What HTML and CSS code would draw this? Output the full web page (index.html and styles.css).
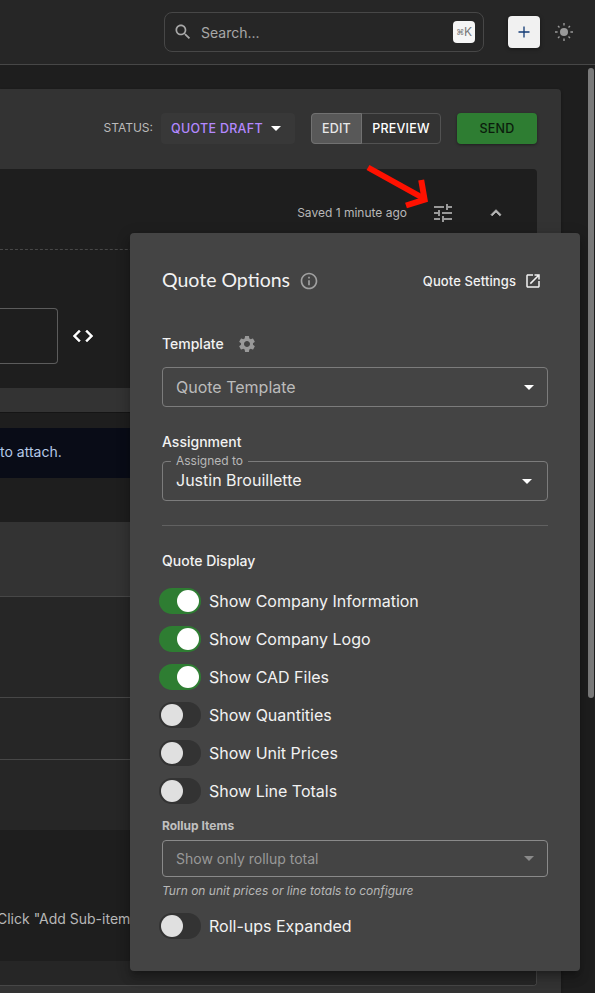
FILE: index.html
```html
<!DOCTYPE html>
<html lang="en">
<head>
  <meta charset="UTF-8">
  <meta name="viewport" content="width=device-width, initial-scale=1.0">
  <title>Quote Draft</title>
  <link rel="stylesheet" href="styles.css">
</head>
<body>
  <header class="topbar">
    <div class="search">
      <svg class="search-icon" viewBox="0 0 24 24"><path d="M15.5 14h-.79l-.28-.27C15.41 12.59 16 11.11 16 9.5 16 5.91 13.09 3 9.5 3S3 5.91 3 9.5 5.91 16 9.5 16c1.61 0 3.09-.59 4.23-1.57l.27.28v.79l5 4.99L20.49 19l-4.99-5zm-6 0C7.01 14 5 11.99 5 9.5S7.01 5 9.5 5 14 7.01 14 9.5 11.99 14 9.5 14z"/></svg>
      <span class="search-text">Search...</span>
      <span class="shortcut"><small>⌘</small>K</span>
    </div>
    <button class="add-button" aria-label="Add">
      <svg viewBox="0 0 12 12"><path d="M6 .5v11M.5 6h11"/></svg>
    </button>
    <svg class="sun-icon" viewBox="0 0 20 20">
      <circle cx="10" cy="10" r="4"/>
      <path d="M10 1v2.6M10 16.4V19M1 10h2.6M16.4 10H19M4 4l1.5 1.5M14.5 14.5L16 16M4 16l1.5-1.5M14.5 5.5L16 4"/>
    </svg>
  </header>

  <main class="page">
    <div class="quote">
      <div class="toolbar">
        <span class="status-label">STATUS:</span>
        <button class="status-button">QUOTE DRAFT <i class="caret"></i></button>
        <div class="toggle-group">
          <button class="toggle selected">EDIT</button>
          <button class="toggle">PREVIEW</button>
        </div>
        <button class="send-button">SEND</button>
      </div>

      <section class="details">
        <div class="details-bar">
          <span class="saved">Saved 1 minute ago</span>
          <svg class="tune-icon" viewBox="0 0 24 24"><path d="M3 17v2h6v-2H3zM3 5v2h10V5H3zm10 16v-2h8v-2h-8v-2h-2v6h2zM7 9v2H3v2h4v2h2V9H7zm14 4v-2H11v2h10zm-6-4h2V7h4V5h-4V3h-2v6z"/></svg>
          <svg class="collapse-icon" viewBox="0 0 24 24"><path d="M12 8l-6 6 1.41 1.41L12 10.83l4.59 4.58L18 14z"/></svg>
        </div>
        <div class="field-row">
          <div class="field"></div>
          <svg class="code-icon" viewBox="0 0 24 24"><path d="M9.4 16.6L4.8 12l4.6-4.6L8 6l-6 6 6 6 1.4-1.4zm5.2 0l4.6-4.6-4.6-4.6L16 6l6 6-6 6-1.4-1.4z"/></svg>
        </div>
      </section>

      <section class="items">
        <div class="notice">to attach.</div>
        <div class="items-head"></div>
        <div class="item item-tall"></div>
        <div class="item"></div>
        <div class="item item-last"></div>
        <div class="sub-items">Click "Add Sub-item</div>
        <div class="items-foot"></div>
      </section>
    </div>
    <div class="scroll-thumb"></div>
  </main>

  <svg class="arrow" viewBox="0 0 64 48"><path d="M4 5.500L59 36"/><path d="M57.200 18L60.600 37.600L42 43.500"/></svg>

  <div class="popover">
    <div class="popover-head">
      <h2>Quote Options</h2>
      <svg class="info-icon" viewBox="0 0 24 24"><path d="M11 7h2v2h-2zm0 4h2v6h-2zm1-9C6.480 2 2 6.480 2 12s4.480 10 10 10 10-4.480 10-10S17.520 2 12 2zm0 18c-4.410 0-8-3.590-8-8s3.590-8 8-8 8 3.590 8 8-3.590 8-8 8z"/></svg>
      <a class="settings-link">Quote Settings
        <svg viewBox="0 0 24 24"><path d="M19 19H5V5h7V3H5c-1.110 0-2 .9-2 2v14c0 1.100.890 2 2 2h14c1.100 0 2-.9 2-2v-7h-2v7zM14 3v2h3.590l-9.830 9.830 1.410 1.410L19 6.410V10h2V3h-7z"/></svg>
      </a>
    </div>

    <h3 class="template-title">Template
      <svg viewBox="0 0 24 24"><path d="M19.140 12.940c.040-.3.060-.610.060-.940 0-.320-.020-.640-.070-.940l2.030-1.580c.180-.140.230-.410.120-.610l-1.920-3.320c-.120-.220-.370-.290-.590-.220l-2.390.960c-.5-.380-1.030-.7-1.620-.940l-.360-2.540c-.040-.240-.240-.410-.480-.410h-3.840c-.240 0-.430.170-.470.410l-.360 2.540c-.590.240-1.130.570-1.620.940l-2.390-.960c-.220-.080-.470 0-.590.220L2.740 8.870c-.120.210-.080.470.120.610l2.030 1.580c-.050.3-.090.630-.090.940s.020.640.070.940l-2.030 1.580c-.180.140-.230.410-.120.610l1.920 3.320c.120.220.370.290.590.220l2.390-.960c.5.380 1.030.7 1.620.940l.360 2.540c.050.240.240.410.480.410h3.840c.240 0 .440-.170.470-.410l.360-2.540c.590-.240 1.130-.560 1.620-.940l2.390.960c.220.080.470 0 .590-.220l1.920-3.320c.120-.220.070-.470-.120-.610l-2.010-1.580zM12 15.600c-1.980 0-3.600-1.620-3.600-3.600s1.620-3.600 3.600-3.600 3.600 1.620 3.600 3.600-1.620 3.600-3.600 3.600z"/></svg>
    </h3>
    <div class="select placeholder">Quote Template <i class="caret"></i></div>

    <h3 class="assignment-title">Assignment</h3>
    <div class="select assigned"><span class="select-label">Assigned to</span>Justin Brouillette <i class="caret"></i></div>

    <hr>

    <h3 class="display-title">Quote Display</h3>
    <div class="switch-row"><span class="switch on"></span>Show Company Information</div>
    <div class="switch-row"><span class="switch on"></span>Show Company Logo</div>
    <div class="switch-row"><span class="switch on"></span>Show CAD Files</div>
    <div class="switch-row"><span class="switch"></span>Show Quantities</div>
    <div class="switch-row"><span class="switch"></span>Show Unit Prices</div>
    <div class="switch-row"><span class="switch"></span>Show Line Totals</div>

    <h4>Rollup Items</h4>
    <div class="select small disabled">Show only rollup total <i class="caret"></i></div>
    <p class="hint">Turn on unit prices or line totals to configure</p>
    <div class="switch-row"><span class="switch"></span>Roll-ups Expanded</div>
  </div>
</body>
</html>
```
FILE: styles.css
```css
* {
  box-sizing: border-box;
  margin: 0;
  padding: 0;
}

body {
  font-family: Inter, sans-serif;
  background: #1e1e1e;
  color: #fff;
  height: 993px;
  overflow: hidden;
  position: relative;
}

button {
  font-family: inherit;
  border: none;
  cursor: pointer;
}

svg {
  fill: currentColor;
  flex-shrink: 0;
}

.caret {
  border: 5px solid transparent;
  border-top-color: currentColor;
  border-bottom: none;
}

/* top bar */
.topbar {
  height: 65px;
  background: #262626;
  border-bottom: 1px solid #474747;
  display: flex;
  align-items: center;
  padding-left: 164px;
}

.search {
  width: 320px;
  height: 40px;
  border: 1px solid #474747;
  border-radius: 8px;
  display: flex;
  align-items: center;
  padding: 0 8px;
  color: #a8a8a8;
}

.search-icon {
  width: 20px;
  height: 20px;
}

.search-text {
  font-size: 14px;
  margin-left: 8px;
  flex-grow: 1;
}

.shortcut {
  width: 22px;
  height: 22px;
  border-radius: 4px;
  background: #f5f5f5;
  color: #777;
  font-size: 12px;
  line-height: 21px;
  text-align: center;
  letter-spacing: -0.3px;
}

.shortcut small {
  font-size: 8px;
  vertical-align: 1px;
}

.add-button {
  width: 32px;
  height: 32px;
  margin-left: 24px;
  border-radius: 4px;
  background: #f1f1f1;
  display: flex;
  align-items: center;
  justify-content: center;
  box-shadow: 0 1px 4px rgba(0, 0, 0, 0.4);
}

.add-button svg {
  width: 12px;
  height: 12px;
  stroke: #123a75;
  stroke-width: 1.3;
}

.sun-icon {
  width: 20px;
  height: 20px;
  margin-left: 14px;
  color: #999;
}

.sun-icon path {
  stroke: currentColor;
  stroke-width: 1.4;
}

/* quote page */
.page {
  display: flex;
  justify-content: space-between;
  height: 928px;
}

.quote {
  width: 561px;
  height: 920px;
  margin-top: 24px;
  padding-right: 24px;
  background: #333;
  border-radius: 0 4px 0 0;
  box-shadow: 0 1px 3px rgba(0, 0, 0, 0.3);
}

.scroll-thumb {
  width: 6px;
  height: 630px;
  margin: 3px 1px 0 0;
  border-radius: 3px;
  background: #7a7a7a;
}

.toolbar {
  height: 80px;
  display: flex;
  align-items: center;
  justify-content: flex-end;
  padding-bottom: 2px;
}

.status-label {
  font-size: 12px;
  color: #bbb;
  margin: -2px 8px 0 0;
}

.status-button {
  width: 134px;
  height: 31px;
  background: #383838;
  border-radius: 4px;
  color: #b388ff;
  font-size: 12.5px;
  font-weight: 500;
  letter-spacing: 0.3px;
  display: flex;
  align-items: center;
  gap: 8px;
  padding-left: 10px;
}

.status-button .caret {
  color: #fff;
}

.toggle-group {
  width: 130px;
  height: 31px;
  display: flex;
  margin: 0 16px;
  border: 1px solid #525252;
  border-radius: 4px;
}

.toggle {
  flex-grow: 1;
  background: none;
  color: #fff;
  font-size: 12.5px;
  font-weight: 500;
  letter-spacing: 0.2px;
}

.toggle.selected {
  flex: 0 0 51px;
  margin: -1px 0 -1px -1px;
  background: #585858;
  border: 1px solid #717171;
  border-radius: 4px 0 0 4px;
  color: #e8e8e8;
}

.send-button {
  width: 80px;
  height: 31px;
  background: #2e7d32;
  color: #0b1c0c;
  border-radius: 4px;
  font-size: 12.5px;
  font-weight: 500;
  letter-spacing: 0.2px;
  box-shadow: 0 1px 3px rgba(0, 0, 0, 0.4);
}

.details {
  height: 219px;
  background: #1e1e1e;
  border-radius: 0 4px 0 0;
}

.details-bar {
  height: 81px;
  padding: 8px 31px 0 0;
  border-bottom: 1px dashed #474747;
  display: flex;
  align-items: center;
  justify-content: flex-end;
  color: #b8b8b8;
}

.saved {
  font-size: 12px;
  margin-top: -2px;
}

.tune-icon {
  width: 24px;
  height: 24px;
  margin-left: 24px;
  color: #999;
}

.collapse-icon {
  width: 20px;
  height: 20px;
  margin-left: 31px;
  stroke: currentColor;
  stroke-width: 1;
}

.field-row {
  display: flex;
  align-items: center;
  padding-top: 58px;
}

.field {
  width: 58px;
  height: 56px;
  border: 1px solid #5c5c5c;
  border-left: none;
  border-radius: 0 4px 4px 0;
}

.code-icon {
  width: 24px;
  height: 24px;
  margin-left: 13px;
  stroke: currentColor;
  stroke-width: 0.5;
}

.items {
  height: 574px;
  margin-top: 24px;
  padding-top: 16px;
  background: #1e1e1e;
  border: 1px solid #474747;
  border-top-color: #151515;
  border-left: none;
  border-radius: 0 4px 4px 0;
  overflow: hidden;
}

.notice {
  height: 50px;
  margin-top: -1px;
  background: #090c17;
  color: #b5c9e8;
  font-size: 14px;
  line-height: 48px;
}

.items-head {
  height: 75px;
  margin-top: 44px;
  background: #333;
  border-bottom: 1px solid #474747;
}

.item {
  height: 62px;
  background: #262626;
  border-bottom: 1px solid #474747;
}

.item-tall {
  height: 101px;
}

.item-last {
  height: 70px;
  border: none;
}

.sub-items {
  height: 131px;
  padding-top: 80px;
  margin-left: -3px;
  font-size: 14px;
  line-height: 18px;
  color: #b8b8b8;
}

.items-foot {
  height: 24px;
  background: #262626;
}

/* red pointer towards the options icon */
.arrow {
  position: absolute;
  left: 364px;
  top: 162px;
  width: 64px;
  height: 48px;
  fill: none;
  stroke: #ff1100;
  stroke-width: 6;
}

/* quote options */
.popover {
  position: absolute;
  left: 130px;
  top: 233px;
  width: 450px;
  height: 738px;
  padding: 32px;
  background: #444;
  color: #f2f2f2;
  border-radius: 4px;
  box-shadow: 0 5px 5px -3px rgba(0, 0, 0, 0.2), 0 8px 10px 1px rgba(0, 0, 0, 0.14), 0 3px 14px 2px rgba(0, 0, 0, 0.12);
}

.popover-head {
  display: flex;
  align-items: center;
  height: 32px;
}

h2 {
  font-family: Lato, sans-serif;
  font-size: 19.5px;
  font-weight: 400;
  line-height: 24px;
  width: 128px;
  white-space: nowrap;
  margin-top: -2px;
}

.info-icon {
  width: 20px;
  height: 20px;
  margin-left: 9px;
  color: #a0a0a0;
}

.settings-link {
  margin-left: auto;
  padding-right: 6px;
  display: flex;
  align-items: center;
  gap: 8px;
  font-size: 13px;
  font-weight: 500;
  letter-spacing: 0.1px;
}

.settings-link svg {
  width: 18px;
  height: 18px;
}

h3 {
  font-size: 14px;
  font-weight: 500;
  line-height: 22px;
}

.template-title {
  display: flex;
  align-items: center;
  gap: 13px;
  margin: 36px 0 12px;
}

.template-title svg {
  width: 20px;
  height: 20px;
  color: #999;
}

.select {
  height: 40px;
  border: 1px solid #7c7c7c;
  border-radius: 4px;
  display: flex;
  align-items: center;
  justify-content: space-between;
  padding: 0 13px;
  font-size: 16px;
  position: relative;
}

.placeholder {
  color: #bbb;
}

.select .caret {
  color: #fff;
}

.assignment-title {
  margin: 24px 0 8px;
}

.assigned {
  padding: 0 15px 2px 13px;
}

.assigned .caret {
  margin-top: 3px;
}

/* floating label sits over the border */
.select-label {
  position: absolute;
  left: 8px;
  top: -9px;
  padding: 0 5px;
  background: #444;
  color: #b8b8b8;
  font-size: 12px;
  line-height: 16px;
}

hr {
  border: none;
  border-top: 1px solid #616161;
  margin: 24px 0;
}

.display-title {
  margin-bottom: 10px;
}

.switch-row {
  display: flex;
  align-items: center;
  height: 38px;
  gap: 8px;
  margin-left: -3px;
  font-size: 16px;
}

.switch {
  width: 42px;
  height: 26px;
  padding: 2px;
  border-radius: 13px;
  background: #333;
}

.switch::before {
  content: "";
  display: block;
  width: 22px;
  height: 22px;
  border-radius: 50%;
  background: #e0e0e0;
}

.switch.on {
  background: #2e7d32;
}

.switch.on::before {
  margin-left: 16px;
  background: #fff;
}

h4 {
  font-size: 12px;
  font-weight: 700;
  line-height: 16px;
  color: #c0c0c0;
  margin: 8px 0 6px;
}

.small {
  height: 37px;
  font-size: 14px;
  padding-bottom: 1px;
}

.disabled {
  color: #999;
  border-color: #8a8a8a;
}

.disabled .caret {
  color: #8a8a8a;
}

.hint {
  font-size: 12px;
  font-style: italic;
  line-height: 20px;
  color: #b8b8b8;
  margin: 4px 0 6px;
}
```
